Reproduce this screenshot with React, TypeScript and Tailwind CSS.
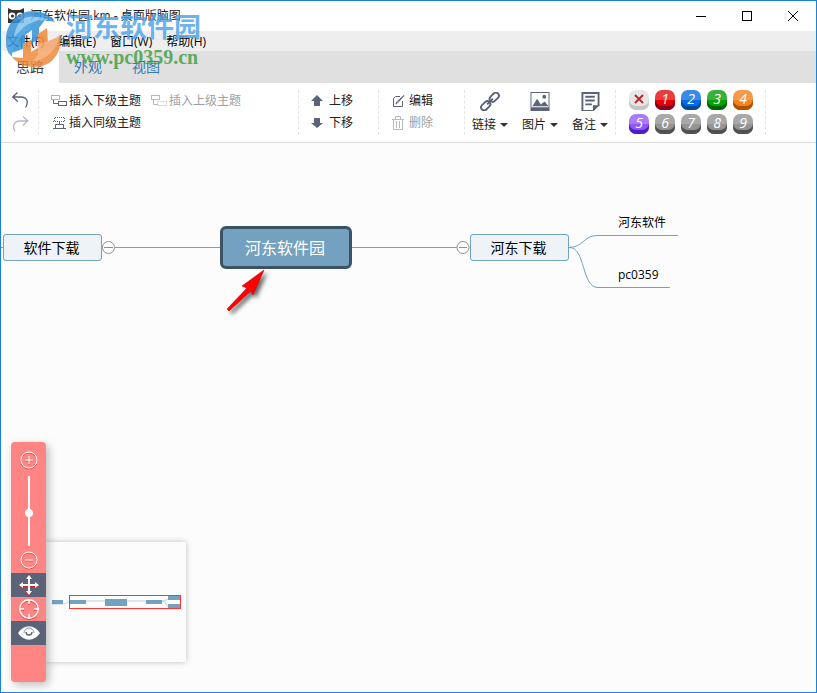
import { useState } from 'react'
import type { ReactNode } from 'react'

const menus = ['文件(F)', '编辑(E)', '窗口(W)', '帮助(H)']
const tabs = ['思路', '外观', '视图']

const priorities = [
  { label: '1', color: 'from-[#ea3c3c] to-[#e60000] shadow-[inset_0_-4px_0_#840023]' },
  { label: '2', color: 'from-[#3a8aea] to-[#006be6] shadow-[inset_0_-4px_0_#004a95]' },
  { label: '3', color: 'from-[#3ab03a] to-[#00a300] shadow-[inset_0_-4px_0_#006300]' },
  { label: '4', color: 'from-[#f59a4a] to-[#f58220] shadow-[inset_0_-4px_0_#b25000]' },
  { label: '5', color: 'from-[#aa7af8] to-[#9254f5] shadow-[inset_0_-4px_0_#4720c4]' },
  { label: '6', color: 'from-[#a8a8a8] to-[#949494] shadow-[inset_0_-4px_0_#515151]' },
  { label: '7', color: 'from-[#a8a8a8] to-[#949494] shadow-[inset_0_-4px_0_#515151]' },
  { label: '8', color: 'from-[#a8a8a8] to-[#949494] shadow-[inset_0_-4px_0_#515151]' },
  { label: '9', color: 'from-[#a8a8a8] to-[#949494] shadow-[inset_0_-4px_0_#515151]' },
]

function Watermark() {
  return (
    <div className="absolute left-1 top-2 flex gap-1 pointer-events-none" aria-hidden="true">
      <svg width="57" height="60" viewBox="0 0 57 60" opacity="0.85">
        <path d="M1 31C1 14 13 2 28 2c10 0 17 4 22 11l-10-2-6 8v11l-7 4V21l-7 5v13L4 45C2 41 1 36 1 31z" fill="#3594d8" />
        <path d="M1 34C8 27 12 20 29 12L22 22 11 34c-3 5-4 9-4 14C3 44 1 39 1 34z" fill="#3e9de0" />
        <path d="M17 10c8-4 20-3 28 2-10-2-16 0-25 5L9 28c1-7 4-14 8-18z" fill="#83c2ee" />
        <path d="M55 26c3 17-8 32-25 32C19 58 12 54 7 48l11 1V35l8-4v12l7-4V25l9-6 1 15c6-2 9-5 12-8z" fill="#f08a3c" />
        <path d="M55 26C52 41 42 50 26 54l7-8V35l10-3c6-2 10-4 12-6z" fill="#f5a66b" />
      </svg>
      <div className="flex flex-col">
        <span className="text-[27px] leading-9 font-bold text-[#52a6ea]/85">河东软件园</span>
        <span className="font-['Liberation_Serif'] text-xl leading-6 font-bold text-[#43a047]/85">www.pc0359.cn</span>
      </div>
    </div>
  )
}

function TitleBar() {
  return (
    <header className="flex h-[30px] items-center bg-white pl-[7px]">
      <svg width="16" height="16" viewBox="0 0 16 16" className="mr-1.5">
        <path d="M0 0l4 2h8l4-2v15H0z" fill="#333" />
        <circle cx="4" cy="8" r="3.4" fill="#fff" />
        <circle cx="12" cy="8" r="3.4" fill="#fff" />
        <circle cx="4.5" cy="8" r="1.6" fill="#333" />
        <circle cx="11.5" cy="8" r="1.6" fill="#333" />
        <path d="M7 11h2l-1 2z" fill="#fff" />
      </svg>
      <h1 className="text-xs text-[#222]">河东软件园.km - 桌面版脑图</h1>
      <div className="ml-auto flex">
        <button aria-label="最小化" className="flex h-7 w-[46px] items-center justify-center">
          <svg width="10" height="10"><path d="M0 5.5h10" stroke="#000" /></svg>
        </button>
        <button aria-label="最大化" className="flex h-7 w-[46px] items-center justify-center">
          <svg width="10" height="10"><rect x=".5" y=".5" width="9" height="9" fill="none" stroke="#000" /></svg>
        </button>
        <button aria-label="关闭" className="flex h-7 w-[46px] items-center justify-center">
          <svg width="10" height="10"><path d="M0 0l10 10M10 0L0 10" stroke="#000" /></svg>
        </button>
      </div>
    </header>
  )
}

function ToolButton({ icon, children, disabled = false }: { icon: ReactNode; children: ReactNode; disabled?: boolean }) {
  return (
    <button disabled={disabled} className="flex h-[22px] items-center gap-0.5 text-[#222] disabled:text-[#a0a0a0]">
      {icon}
      <span>{children}</span>
    </button>
  )
}

function DropButton({ icon, children }: { icon: ReactNode; children: ReactNode }) {
  return (
    <button className="flex w-9 flex-col items-center gap-1 text-[#222]">
      {icon}
      <span className="flex items-center gap-1 whitespace-nowrap leading-5">
        {children}
        <svg width="8" height="4"><path d="M0 0h8L4 4z" fill="#333" /></svg>
      </span>
    </button>
  )
}

function Toolbar() {
  return (
    <div className="flex h-[60px] border-b border-[#ddd] bg-white py-[7px] text-xs leading-4">
      <div className="flex w-[38px] flex-col gap-2 border-r border-dashed border-[#e4e4e4] pl-[11px] pt-0.5">
        <button aria-label="撤销">
          <svg width="17" height="16" viewBox="0 0 17 16" fill="none" stroke="#5b6379" strokeWidth="1.3">
            <path d="M5.5.5L.8 5l5 4.5M1 5h8c6 0 8 5 4.5 10.5" />
          </svg>
        </button>
        <button aria-label="重做" disabled>
          <svg width="17" height="16" viewBox="0 0 17 16" fill="none" stroke="#b5b9c4" strokeWidth="1.3">
            <path d="M11 .5L15.8 5l-5 4.5M15.5 5H8C2 5 0 10 3 15.5" />
          </svg>
        </button>
      </div>

      <div className="flex w-[260px] gap-2.5 border-r border-dashed border-[#e4e4e4] pl-3">
        <div className="flex flex-col">
          <ToolButton
            icon={
              <svg width="16" height="12" fill="none" stroke="#5b6379">
                <rect x=".5" y=".5" width="8" height="4" strokeDasharray="1 1" />
                <path d="M2.5 5v3.5H7" />
                <rect x="7.5" y="6.500" width="8" height="4" />
              </svg>
            }
          >
            插入下级主题
          </ToolButton>
          <ToolButton
            icon={
              <svg width="16" height="12" fill="none" stroke="#5b6379">
                <path d="M3.5 4V.5h10V4M2 4.5h12" strokeDasharray="1 1" />
                <path d="M8.5 4v4M2 11.5h13" />
                <path d="M4.5 11V7.500h8V11" />
              </svg>
            }
          >
            插入同级主题
          </ToolButton>
        </div>
        <div>
          <ToolButton
            disabled
            icon={
              <svg width="16" height="12" fill="none" stroke="#b5b9c4">
                <rect x=".5" y=".5" width="8" height="4" />
                <path d="M2.5 5v4.5H7" />
                <rect x="6.5" y="6.5" width="9" height="4" strokeDasharray="1 1" />
              </svg>
            }
          >
            插入上级主题
          </ToolButton>
        </div>
      </div>

      <div className="flex w-20 flex-col border-r border-dashed border-[#e4e4e4] pl-3">
        <ToolButton icon={<svg width="16" height="12"><path d="M6 0l6 6H9v5H3V6H0z" fill="#5b6379" /></svg>}>上移</ToolButton>
        <ToolButton icon={<svg width="16" height="12"><path d="M6 11l6-5H9V1H3v5H0z" fill="#5b6379" /></svg>}>下移</ToolButton>
      </div>

      <div className="flex w-[86px] flex-col border-r border-dashed border-[#e4e4e4] pl-3">
        <ToolButton
          icon={
            <svg width="16" height="14" fill="none" stroke="#5b6379">
              <path d="M9 2.5H4.500l-2 2v8h9V7" />
              <path d="M13 1.500L6.500 9 5 10l.5-2z" />
            </svg>
          }
        >
          编辑
        </ToolButton>
        <ToolButton
          disabled
          icon={
            <svg width="16" height="14" fill="none" stroke="#b5b9c4">
              <path d="M1 3.5h12M4.500 3V.5h5V3M2.500 4v9.500h9V4M5.500 5v7M8.500 5v7" />
            </svg>
          }
        >
          删除
        </ToolButton>
      </div>

      <div className="flex w-[151px] gap-3.5 border-r border-dashed border-[#e4e4e4] pl-[7px] pt-0.5">
        <DropButton
          icon={
            <svg width="22" height="20" viewBox="0 0 22 20" fill="none" stroke="#5b6379" strokeWidth="2">
              <rect x="-5.500" y="-3.200" width="11" height="6.400" rx="3.200" transform="translate(15.500 5.500) rotate(-45)" />
              <rect x="-5.500" y="-3.200" width="11" height="6.400" rx="3.200" transform="translate(6.500 14.500) rotate(-45)" />
              <path d="M8 13l6-6" />
            </svg>
          }
        >
          链接
        </DropButton>
        <DropButton
          icon={
            <svg width="20" height="20" viewBox="0 0 20 20" fill="#5b6379">
              <path d="M0 0h20v20H0zM1 1v15h18V1z" fillRule="evenodd" />
              <path d="M2 15l5-8 5 8zM12 15l-1-2 4-3 4 5z" />
              <circle cx="14.500" cy="5" r="2" />
            </svg>
          }
        >
          图片
        </DropButton>
        <DropButton
          icon={
            <svg width="20" height="20" viewBox="0 0 20 20" fill="none" stroke="#5b6379" strokeWidth="2">
              <path d="M13 20H2V1h17v14" />
              <path d="M5 5h10M5 9h10M5 13h7" />
              <path d="M13 14h7l-7 7z" fill="#5b6379" stroke="none" />
            </svg>
          }
        >
          备注
        </DropButton>
      </div>

      <div className="w-[150px] border-r border-dashed border-[#e4e4e4] pl-[13px]">
        <div className="grid grid-cols-[repeat(5,20px)] gap-x-1.5 gap-y-1">
          <button
            aria-label="移除优先级"
            className="flex size-5 items-center justify-center rounded-[7px] bg-[#e6e6e6] pb-0.5 shadow-[inset_0_-4px_0_#c4c4c4]"
          >
            <svg width="10" height="10"><path d="M1 1l8 8M9 1L1 9" stroke="#c1272d" strokeWidth="2" /></svg>
          </button>
          {priorities.map((p) => (
            <button
              key={p.label}
              className={`flex size-5 items-center justify-center rounded-[7px] bg-linear-to-b from-50% to-50% pb-0.5 font-['Open_Sans'] text-sm leading-4 text-white italic ${p.color}`}
            >
              {p.label}
            </button>
          ))}
        </div>
      </div>
    </div>
  )
}

function MindMap() {
  return (
    <div className="text-black">
      <svg className="absolute left-0 top-0" width="700" height="180" fill="none" stroke="#73a1bf">
        <path d="M0 104.500h2M114 104.500h106M350 104.500h106" />
        <path d="M568 104.500C583 104 582 92.500 597 92.500h80" />
        <path d="M568 104.500C585 104 580 144.500 597 144.500h72" />
        <g stroke="#8f8f8f" fill="#fff">
          <circle cx="107.500" cy="104.500" r="6" />
          <circle cx="462" cy="104.500" r="6" />
          <path d="M103 104.500h9M458 104.500h8" />
        </g>
      </svg>
      <div className="absolute left-0.5 top-[91px] flex h-[27px] w-[99px] items-center justify-center rounded-[3px] border border-[#73a1bf] bg-[#edf3f6] pr-0.5 text-sm">
        软件下载
      </div>
      <div className="absolute left-[219px] top-[83px] flex h-[43px] w-[132px] items-center justify-center rounded-md border-3 border-[#3b5364] bg-[#73a1bf] pr-0.5 text-base text-white">
        河东软件园
      </div>
      <div className="absolute left-[469px] top-[91px] flex h-[27px] w-[99px] items-center justify-center rounded-[3px] border border-[#73a1bf] bg-[#edf3f6] pr-0.5 text-sm">
        河东下载
      </div>
      <div className="absolute left-[617px] top-[72px] text-xs leading-4">河东软件</div>
      <div className="absolute left-[617px] top-[124px] text-xs leading-4">pc0359</div>

      {/* 红色箭头 */}
      <svg className="absolute left-[222px] top-[122px] drop-shadow-[3px_3px_2px_rgba(0,0,0,0.6)]" width="48" height="52">
        <path d="M41 5L19 21l5 2L4 44l2 2 22-20 2 4z" fill="#f00" stroke="#b11" strokeWidth="0.6" />
      </svg>
    </div>
  )
}

function Navigator() {
  const [zoom, setZoom] = useState(47)

  return (
    <div className="absolute bottom-2.5 left-2.5 flex items-end">
      <div className="relative z-10 flex h-60 w-[35px] flex-col items-center rounded bg-[#ff8484] pt-2 shadow-[3px_3px_8px_rgba(0,0,0,0.25)]">
        <button aria-label="放大" className="size-5">
          <svg width="20" height="20" fill="none" stroke="#fff" className="drop-shadow-[0_1px_0_rgba(200,0,0,0.4)]">
            <circle cx="10" cy="10" r="8" />
            <path d="M6 10h8M10 6v8" />
          </svg>
        </button>
        <input
          type="range"
          aria-label="缩放"
          value={zoom}
          onChange={(e) => setZoom(Number(e.target.value))}
          className="mt-1.5 mb-1 h-[70px] w-2 appearance-none bg-[linear-gradient(#fff,#fff)] bg-size-[2px_100%] bg-center bg-no-repeat [direction:rtl] [writing-mode:vertical-lr] [&::-webkit-slider-thumb]:size-2 [&::-webkit-slider-thumb]:appearance-none [&::-webkit-slider-thumb]:rounded-full [&::-webkit-slider-thumb]:bg-white"
        />
        <button aria-label="缩小" className="mb-[3px] size-5">
          <svg width="20" height="20" fill="none" stroke="#fff" className="drop-shadow-[0_1px_0_rgba(200,0,0,0.4)]">
            <circle cx="10" cy="10" r="8" />
            <path d="M6 10h8" />
          </svg>
        </button>
        <button aria-label="移动" className="flex h-6 w-full items-center justify-center bg-[#5b6379]">
          <svg width="20" height="20" className="drop-shadow-[0_1px_0_rgba(255,0,0,0.7)]">
            <path d="M10 2v16M2 10h16" stroke="#fff" strokeWidth="2" />
            <path d="M10 0l3 4H7zM10 20l3-4H7zM0 10l4-3v6zM20 10l-4-3v6z" fill="#fff" />
          </svg>
        </button>
        <button aria-label="定位" className="flex h-6 w-full items-center justify-center">
          <svg width="22" height="22" fill="none" stroke="#fff" strokeWidth="1.5" className="drop-shadow-[0_1px_0_rgba(200,0,0,0.5)]">
            <circle cx="11" cy="11" r="9.3" />
            <path d="M11 1v5M11 16v5M1 11h5M16 11h5" />
          </svg>
        </button>
        <button aria-label="导航器" className="flex h-6 w-full items-center justify-center bg-[#5b6379]">
          <svg width="22" height="16">
            <path d="M0 8C6-1 16-1 22 8c-6 9-16 9-22 0z" fill="#fff" />
            <path d="M6 8a5 5 0 0 1 10 0" fill="none" stroke="#8a90a0" />
            <path d="M8 7c0 4 6 4 6 0" fill="none" stroke="#5b6379" strokeWidth="1.3" />
          </svg>
        </button>
      </div>
      <div className="mb-5 h-[120px] w-[140px] bg-[#fcfcfc] shadow-[0_0_6px_rgba(0,0,0,0.25)]">
        <svg width="140" height="120" fill="none">
          <path d="M6 62h12c3 0 3-3 6-3h92c4 0 4-2 7-2M116 59c5 0 3 6 8 6" stroke="#b9cfdd" />
          <g fill="#73a1bf">
            <rect x="6" y="58" width="11" height="4" />
            <rect x="24" y="58" width="16" height="4" />
            <rect x="59" y="57" width="22" height="7" />
            <rect x="100" y="58" width="16" height="4" />
            <rect x="122" y="54" width="12" height="4" />
            <rect x="122" y="62" width="12" height="4" />
          </g>
          <rect x="23.500" y="53.500" width="111" height="13" stroke="#f33" />
        </svg>
      </div>
    </div>
  )
}

export default function App() {
  const [activeTab, setActiveTab] = useState('思路')

  return (
    <div className="relative flex min-h-screen flex-col border border-[#1883d7] bg-[#fcfcfc] font-['Open_Sans','Noto_Sans_CJK_SC',sans-serif]">
      <TitleBar />

      <nav className="flex h-5 items-center gap-3.5 bg-[#eee] pl-1.5 pt-0.5 text-xs text-black">
        {menus.map((menu) => (
          <button key={menu}>{menu}</button>
        ))}
      </nav>

      <div className="flex h-8 bg-[#e0e0e0] text-sm">
        {tabs.map((tab) => (
          <button
            key={tab}
            onClick={() => setActiveTab(tab)}
            className={tab === activeTab ? 'bg-white px-[15px] text-[#444]' : 'px-[15px] text-[#337ab7]'}
          >
            {tab}
          </button>
        ))}
      </div>

      <Toolbar />

      <main className="relative flex-1 overflow-hidden">
        <MindMap />
        <Navigator />
      </main>

      <Watermark />
    </div>
  )
}
